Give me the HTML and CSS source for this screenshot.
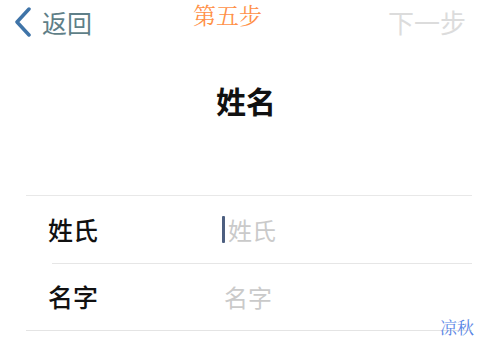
FILE: index.html
```html
<!DOCTYPE html>
<html lang="zh">
<head>
<meta charset="utf-8">
<link rel="stylesheet" href="styles.css">
</head>
<body>
<div class="screen">
  <header class="nav">
    <div class="back">
      <svg class="chevron" width="20" height="30" viewBox="0 0 20 30">
        <polyline points="16,2 4,15 16,28" fill="none" stroke="#3f74a8" stroke-width="3.5" stroke-linecap="round" stroke-linejoin="round"/>
      </svg>
      <span>返回</span>
    </div>
    <div class="next">下一步</div>
  </header>
  <div class="step">第五步</div>
  <h1 class="title">姓名</h1>
  <div class="form">
    <div class="row">
      <div class="label">姓氏</div>
      <div class="field"><span class="caret"></span><span class="placeholder">姓氏</span></div>
    </div>
    <div class="row row-inset">
      <div class="label">名字</div>
      <div class="field"><span class="placeholder">名字</span></div>
    </div>
  </div>
  <div class="mark">凉秋</div>
</div>
</body>
</html>
```
FILE: styles.css
```css
html, body {
  margin: 0;
  padding: 0;
  background: #fff;
}
.screen {
  position: relative;
  width: 492px;
  height: 352px;
  overflow: hidden;
  font-family: "Noto Sans CJK SC", "Noto Sans", sans-serif;
  color: #111;
}
.nav {
  height: 44px;
  display: flex;
  align-items: center;
  justify-content: space-between;
  padding: 0 26px 0 13px;
}
.back {
  display: flex;
  align-items: center;
  gap: 9px;
  color: #5f7f88;
  font-size: 25px;
  line-height: 1;
}
.next {
  color: #dcdcdc;
  font-size: 26px;
  line-height: 1;
}
.step {
  position: absolute;
  left: 193px;
  top: 2px;
  color: #ff9148;
  font-family: "Noto Serif CJK SC", "Liberation Serif", serif;
  font-size: 23px;
  line-height: 26px;
}
.title {
  margin: 38px 0 0;
  text-align: center;
  font-size: 30px;
  font-weight: 600;
  line-height: 36px;
}
.form {
  margin: 77px 20px 0 26px;
  border-top: 1px solid #e8e8e8;
  border-bottom: 1px solid #e4e4e4;
}
.row {
  position: relative;
  height: 67px;
  display: flex;
  align-items: center;
  padding-left: 22px;
}
.row-inset::before {
  content: "";
  position: absolute;
  left: 26px;
  right: 0;
  top: 0;
  height: 1px;
  background: #e6e6e6;
}
.label {
  width: 174px;
  font-size: 25px;
  font-weight: 500;
  line-height: 1;
}
.field {
  display: flex;
  align-items: center;
}
.caret {
  width: 3px;
  height: 27px;
  background: #4d5f80;
  border-radius: 1px;
  margin-right: 3px;
}
.placeholder {
  color: #cacaca;
  font-size: 24px;
  line-height: 1;
}
.row-inset .placeholder {
  margin-left: 2px;
}
.mark {
  position: absolute;
  right: 18px;
  bottom: 15px;
  color: #5a86e6;
  font-family: "Noto Serif CJK SC", "Liberation Serif", serif;
  font-size: 17px;
  line-height: 1.1;
}
```
